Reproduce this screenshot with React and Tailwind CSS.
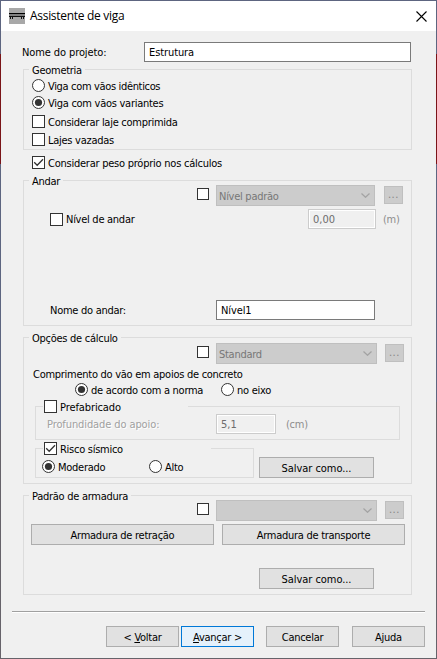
import { useState } from 'react';

const BOX_CLS = 'shrink-0 border border-[#333] bg-white flex items-center justify-center';

function Check({ checked, small, className = '' }) {
  return (
    <span className={`${BOX_CLS} ${small ? 'size-3' : 'size-[13px]'} ${className}`}>
      {checked && (
        <svg viewBox="0 0 11 11" width="11" height="11" fill="none" stroke="#333" strokeWidth="1.3">
          <path d="M1.2 5.2 4.2 8.2 10 2.2" />
        </svg>
      )}
    </span>
  );
}

function Radio({ checked, label, onClick, className = '' }) {
  return (
    <button type="button" onClick={onClick} className={`flex items-center ${className}`}>
      <svg viewBox="0 0 13 13" width="13" height="13" className="shrink-0">
        <circle cx="6.5" cy="6.5" r="6" fill="#fff" stroke="#333" />
        {checked && <circle cx="6.5" cy="6.5" r="3.6" fill="#333" />}
      </svg>
      <span className="ml-[3px] pt-[2px]">{label}</span>
    </button>
  );
}

function CheckRow({ checked, children, className = '' }) {
  return (
    <label className={`flex items-center gap-[3px] ${className}`}>
      <Check checked={checked} />
      <span className="pt-[2px]">{children}</span>
    </label>
  );
}

function Legend({ children }) {
  return <div className="-mt-2 ml-[5px] h-4 w-fit bg-[#f0f0f0] pl-[3px] pr-[3px] leading-[18px]">{children}</div>;
}

// Checkbox, disabled preset list and the "..." button next to it
function PresetRow({ value, wide, className = '' }) {
  return (
    <div className={`flex h-[21px] items-start pl-[173px] ${className}`}>
      <Check small className="mt-[3px]" />
      <div className={`ml-[7px] flex h-[21px] items-center justify-between border border-[#bfbfbf] bg-[#ccc] pl-[2px] pr-1 text-[#777] ${wide ? 'w-[161px]' : 'w-[159px]'}`}>
        <span className="pt-[2px]">{value}</span>
        <svg viewBox="0 0 9 5" width="9" height="5" fill="none" stroke="#a3a3a3" strokeWidth="1.2">
          <path d="M.5.5 4.5 4.3 8.5.5" />
        </svg>
      </div>
      <div className={`mt-px flex h-[18px] w-[19px] items-center justify-center border border-[#bfbfbf] bg-[#ccc] text-[#858585] tracking-[0.6px] ${wide ? 'ml-2' : 'ml-[9px]'}`}>
        ...
      </div>
    </div>
  );
}

function Button({ children, primary, className = '' }) {
  return (
    <button
      type="button"
      className={`h-[21px] border text-center leading-[21px] ${primary ? 'border-[#0078d7] bg-[#e5f1fb]' : 'border-[#adadad] bg-[#e1e1e1]'} ${className}`}
    >
      {children}
    </button>
  );
}

const INPUT_CLS = 'h-5 border border-[#7a7a7a] bg-white px-1 outline-none tracking-[-0.1px]';
const INPUT_OFF_CLS = 'h-5 border border-[#ccc] bg-[#f0f0f0] pl-1 text-[#6d6d6d] outline-none ring-1 ring-inset ring-white tracking-normal';

export default function App() {
  const [spans, setSpans] = useState('variantes');
  const [support, setSupport] = useState('norma');
  const [risk, setRisk] = useState('moderado');

  return (
    <div className="flex h-[659px] w-[437px] overflow-hidden whitespace-nowrap bg-[#f0f0f0] font-['DejaVu_Sans_Condensed','DejaVu_Sans',sans-serif] text-[11px] leading-4 tracking-[-0.27px] text-black [font-stretch:condensed]">
      <div className="flex w-px shrink-0 flex-col bg-[#5d6580]">
        <div className="mt-[54px] h-[110px] bg-[#7a1418]" />
        <div className="mt-[266px] h-[229px] bg-[#66636a]" />
      </div>

      <div className="flex w-[435px] flex-col border-b border-b-[#66636a] border-t border-t-[#5d6580]">
        {/* Title bar */}
        <div className="flex h-[30px] shrink-0 items-center bg-white pl-2 pr-[9px]">
          <svg viewBox="0 0 16 16" width="16" height="16" shapeRendering="crispEdges">
            <path d="M0 0h16v16H0z" fill="#a8a8a8" />
            <path d="M0 5h16v1H0z" fill="#000" />
            <path d="M0 6h16v2H0z" fill="#808080" />
            <path d="M0 8h16v1H0zM1 9h1v2H1zM3 9h1v2H3zM12 9h1v2h-1zM14 9h1v2h-1z" fill="#111" />
          </svg>
          <span className="ml-[5px] font-['Open_Sans',sans-serif] text-[12px] tracking-[-0.3px] [font-stretch:100%]">Assistente de viga</span>
          <svg viewBox="0 0 11 11" width="11" height="11" stroke="#000" strokeWidth="1.1" className="ml-auto">
            <path d="M.5.5 10.5 10.5M10.5.5.5 10.5" />
          </svg>
        </div>

        <div className="mt-[11px] flex h-5 items-center pl-[21px]">
          <span className="w-[122px] pt-[2px] tracking-[-0.1px]">Nome do projeto:</span>
          <input className={`${INPUT_CLS} w-[267px]`} defaultValue="Estrutura" />
        </div>

        {/* Geometry */}
        <section className="ml-[22px] mt-[7px] h-[81px] w-[389px] shrink-0 border border-[#dcdcdc]">
          <Legend>Geometria</Legend>
          <Radio className="ml-2 h-[15px] tracking-[-0.34px]" checked={spans === 'identicos'} onClick={() => setSpans('identicos')} label="Viga com vãos idênticos" />
          <Radio className="ml-2 h-[19px]" checked={spans === 'variantes'} onClick={() => setSpans('variantes')} label="Viga com vãos variantes" />
          <CheckRow className="ml-2 h-[19px]">Considerar laje comprimida</CheckRow>
          <CheckRow className="ml-2 h-[17px]">Lajes vazadas</CheckRow>
        </section>

        <CheckRow checked className="ml-[31px] mt-1 h-[17px] tracking-[-0.24px]">Considerar peso próprio nos cálculos</CheckRow>

        {/* Storey */}
        <section className="ml-[22px] mt-[9px] h-[146px] w-[389px] shrink-0 border border-[#dcdcdc]">
          <Legend>Andar</Legend>
          <PresetRow value="Nível padrão" className="-mt-1" />
          <div className="mt-[3px] flex h-5 items-center pl-[26px]">
            <CheckRow className="w-[258px]">Nível de andar</CheckRow>
            <input className={`${INPUT_OFF_CLS} w-[68px]`} defaultValue="0,00" disabled />
            <span className="ml-[7px] pt-[2px] text-[#8d8d8d]">(m)</span>
          </div>
          <div className="mt-[71px] flex h-5 items-center pl-[26px]">
            <span className="w-[166px] pt-[2px]">Nome do andar:</span>
            <input className={`${INPUT_CLS} w-[159px]`} defaultValue="Nível1" />
          </div>
        </section>

        {/* Calculation options */}
        <section className="ml-[22px] mt-[11px] h-[147px] w-[389px] shrink-0 border border-[#dcdcdc]">
          <Legend>Opções de cálculo</Legend>
          <PresetRow value="Standard" wide className="-mt-[3px]" />
          <div className="ml-[9px] mt-[2px] h-4 leading-[18px]">Comprimento do vão em apoios de concreto</div>
          <div className="flex h-[15px] items-center pl-[51px]">
            <Radio className="w-[146px]" checked={support === 'norma'} onClick={() => setSupport('norma')} label="de acordo com a norma" />
            <Radio checked={support === 'eixo'} onClick={() => setSupport('eixo')} label="no eixo" />
          </div>

          <div className="ml-[11px] mt-[9px] h-[34px] w-[365px] border border-[#dcdcdc]">
            <CheckRow className="-mt-[7px] ml-[7px] h-[13px] w-[145px] bg-[#f0f0f0] pl-px tracking-[-0.1px]">Prefabricado</CheckRow>
            <div className="mt-px flex h-5 items-center pl-[11px] text-[#a0a0a0]">
              <span className="w-[169px] pt-px tracking-[-0.1px] [text-shadow:1px_1px_0_#fff]">Profundidade do apoio:</span>
              <input className={`${INPUT_OFF_CLS} w-[60px]`} defaultValue="5,1" disabled />
              <span className="ml-[10px] pt-px text-[#8d8d8d]">(cm)</span>
            </div>
          </div>

          <div className="ml-[11px] mt-2 flex items-end">
            <div className="h-[30px] w-[219px] border border-[#dcdcdc]">
              <CheckRow checked className="-mt-[7px] ml-[7px] h-[13px] w-[168px] bg-[#f0f0f0] pl-px">Risco sísmico</CheckRow>
              <div className="mt-[3px] flex h-[17px] items-center pl-[6px]">
                <Radio className="w-[107px]" checked={risk === 'moderado'} onClick={() => setRisk('moderado')} label="Moderado" />
                <Radio checked={risk === 'alto'} onClick={() => setRisk('alto')} label="Alto" />
              </div>
            </div>
            <Button className="ml-[5px] w-[115px] tracking-[-0.05px]">Salvar como...</Button>
          </div>
        </section>

        {/* Reinforcement pattern */}
        <section className="ml-[22px] mt-[11px] h-[100px] w-[389px] shrink-0 border border-[#dcdcdc]">
          <Legend>Padrão de armadura</Legend>
          <PresetRow value="" wide className="-mt-1" />
          <div className="mt-[3px] flex gap-2 pl-[7px]">
            <Button className="w-[183px]">Armadura de retração</Button>
            <Button className="w-[183px]">Armadura de transporte</Button>
          </div>
          <Button className="ml-[235px] mt-[23px] block w-[115px] tracking-[-0.05px]">Salvar como...</Button>
        </section>

        <div className="ml-[11px] mt-4 h-[2px] w-[413px] border-b border-t border-b-white border-t-[#a0a0a0]" />

        <div className="mt-[13px] flex pl-[105px]">
          <Button className="w-[73px]">&lt; <u>V</u>oltar</Button>
          <Button primary className="ml-[2px] w-[73px]"><u>A</u>vançar &gt;</Button>
          <Button className="ml-3 w-[73px]">Cancelar</Button>
          <Button className="ml-[13px] w-[73px]">Ajuda</Button>
        </div>
      </div>

      <div className="flex w-px shrink-0 flex-col bg-[#5d6580]">
        <div className="mt-[54px] h-[110px] bg-[#7a1418]" />
        <div className="mt-[238px] h-[257px] bg-[#66636a]" />
      </div>
    </div>
  );
}
